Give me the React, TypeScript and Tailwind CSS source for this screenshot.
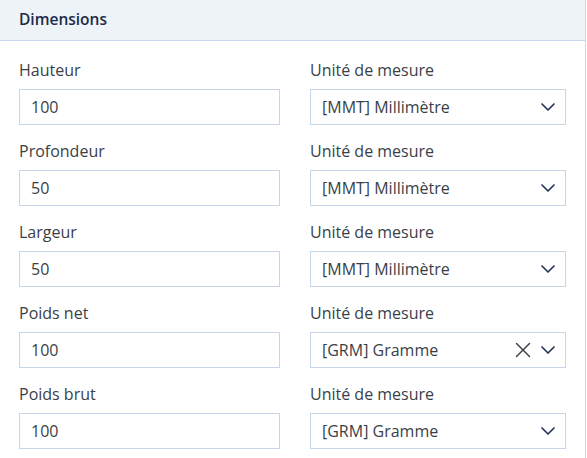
import { ChevronDown, X } from "lucide-react";

const ROWS = [
  { label: "Hauteur", value: "100", unit: "[MMT] Millimètre", clearable: false },
  { label: "Profondeur", value: "50", unit: "[MMT] Millimètre", clearable: false },
  { label: "Largeur", value: "50", unit: "[MMT] Millimètre", clearable: false },
  { label: "Poids net", value: "100", unit: "[GRM] Gramme", clearable: true },
  { label: "Poids brut", value: "100", unit: "[GRM] Gramme", clearable: false },
];

export default function App() {
  return (
    <div className="w-[587px] h-[458px] overflow-hidden bg-white font-['Open_Sans',sans-serif]">
      <div className="w-[586px] border-r border-[#c9d9ec] h-full">
        {/* Header */}
        <div className="h-[41px] bg-[#eef3f8] border-b border-[#c5d8ee] pl-[19px] flex items-center">
          <h2 className="text-[15.5px] font-semibold text-[#1c2a4a]">Dimensions</h2>
        </div>

        {/* Fields */}
        <div className="pl-[19px] pr-[20px] pt-[19px] flex flex-col gap-[16px]">
          {ROWS.map((row, i) => (
            <div key={i} className="grid grid-cols-[261px_256px] gap-x-[30px]">
              <div>
                <div className="h-[20px] leading-[20px] text-[16px] text-[#3a3f47]">{row.label}</div>
                <div className="mt-[9px] h-[36px] border border-[#c6d7ec] flex items-center px-[11px] text-[16px] text-[#3a3f47]">
                  {row.value}
                </div>
              </div>
              <div>
                <div className="h-[20px] leading-[20px] text-[16px] text-[#3a3f47]">Unité de mesure</div>
                <div className="mt-[9px] h-[36px] border border-[#c6d7ec] flex items-center pl-[11px] pr-[5px] text-[16px] text-[#3a3f47]">
                  <span className="flex-1">{row.unit}</span>
                  {row.clearable && (
                    <X className="w-[26px] h-[26px] text-[#3a3f47]" strokeWidth={1.3} />
                  )}
                  <ChevronDown className="w-[24px] h-[24px] text-[#26365a]" strokeWidth={1.7} />
                </div>
              </div>
            </div>
          ))}
        </div>
      </div>
    </div>
  );
}
